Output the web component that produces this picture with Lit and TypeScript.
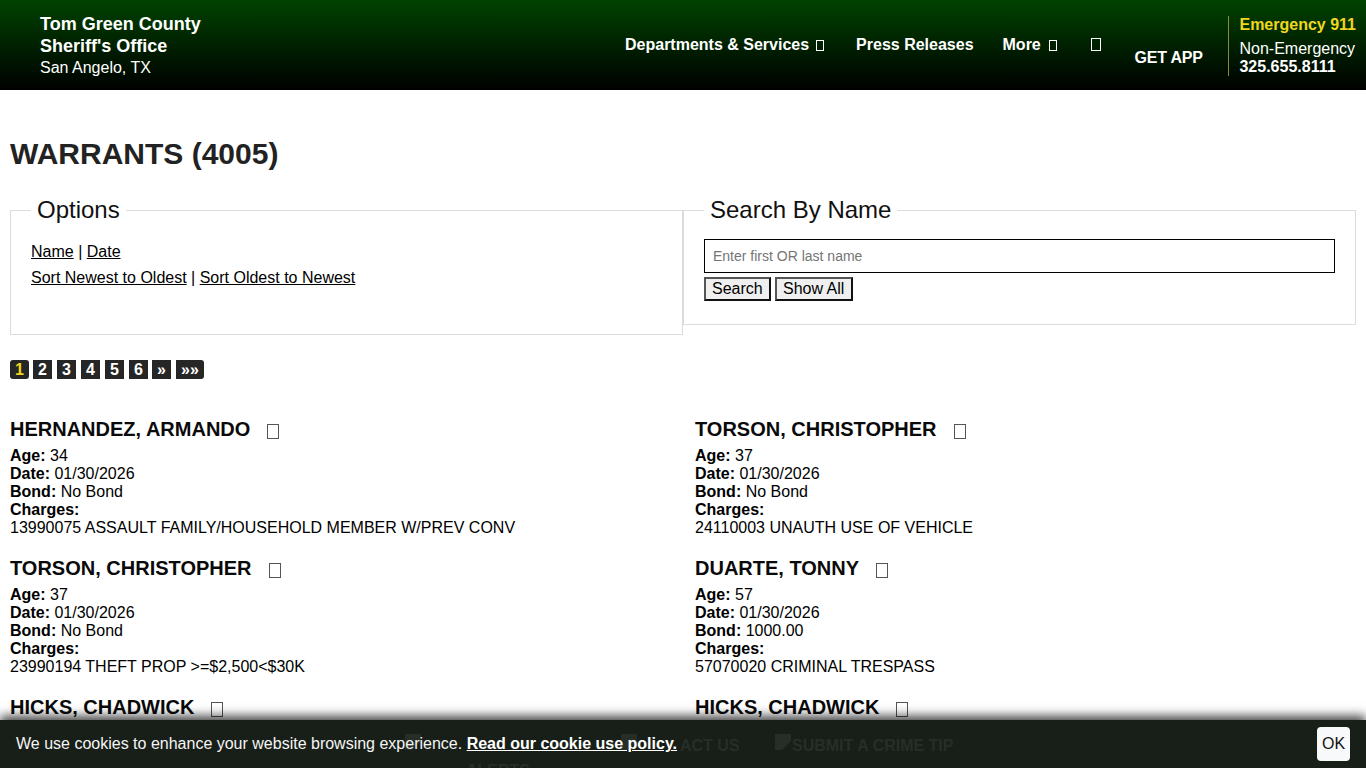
import { LitElement, html, css } from "lit";
import { customElement } from "lit/decorators.js";

const rows = [
  [
    { n: "HERNANDEZ, ARMANDO", a: "34", b: "No Bond", c: "13990075 ASSAULT FAMILY/HOUSEHOLD MEMBER W/PREV CONV" },
    { n: "TORSON, CHRISTOPHER", a: "37", b: "No Bond", c: "24110003 UNAUTH USE OF VEHICLE" },
  ],
  [
    { n: "TORSON, CHRISTOPHER", a: "37", b: "No Bond", c: "23990194 THEFT PROP >=$2,500<$30K" },
    { n: "DUARTE, TONNY", a: "57", b: "1000.00", c: "57070020 CRIMINAL TRESPASS" },
  ],
  [
    { n: "HICKS, CHADWICK", a: "", b: "", c: "" },
    { n: "HICKS, CHADWICK", a: "", b: "", c: "" },
  ],
];

@customElement("app-root")
export class AppRoot extends LitElement {
  static styles = css`
    :host { display: block; height: 768px; overflow: hidden; position: relative; font-family: "Liberation Sans", Arial, sans-serif; color: #000; background: #fff; font-size: 16px; }
    a { color: inherit; }
    header { height: 90px; background: linear-gradient(#004200, #000); color: #fff; display: flex; box-sizing: border-box; padding-right: 10px; }
    .brand { margin-left: 40px; padding-top: 13px; font-size: 18px; line-height: 22px; font-weight: bold; width: 500px; }
    .brand span { display: block; font-size: 16px; font-weight: normal; }
    .nav { flex: 1; display: flex; position: relative; }
    .nav-items { display: flex; padding: 36px 0 0 85px; font-size: 16px; font-weight: bold; line-height: 18px; }
    .nav-items .it { display: flex; align-items: center; height: 18px; margin-right: 32px; white-space: nowrap; }
    .nav-items .dp .tofu { margin-left: 7px; }
    .nav-items .pr { margin-right: 29px; }
    .nav-items .mo { margin-right: 34px; }
    .tofu { display: inline-block; box-sizing: border-box; border: 1px solid currentColor; width: 8px; height: 11px; margin-left: 8px; }
    .nav-items .solo { margin: 0; }
    .nav-items .solo .tofu { margin-left: 0; height: 13px; width: 10px; position: relative; top: -1px; }
    .app { font-weight: bold; font-size: 16px; margin: 49px 0 0 0; line-height: 18px; width: 70px; letter-spacing: -0.2px; white-space: nowrap; }
    .contact { margin: 16px 0 0 24px; height: 60px; border-left: 1px solid #8a8a3a; padding-left: 10px; font-size: 16px; white-space: nowrap; }
    .contact .em { color: #f1d71f; font-weight: bold; line-height: 18px; }
    .contact .ne { line-height: 18px; margin-top: 6px; }
    .contact .ph { font-weight: bold; line-height: 18px; }
    main { padding: 0 10px; }
    h1 { margin: 0; padding-top: 46px; font-size: 30px; line-height: 36px; font-weight: bold; color: #222; }
    .boxes { display: flex; align-items: flex-start; margin-top: 24px; }
    fieldset { flex: 1 1 0; margin: 0; min-width: 0; border: 1px solid #dcdcdc; padding: 0 20px; box-sizing: border-box; }
    legend { font-size: 24px; line-height: 28px; padding: 0 6px; margin-left: 0; color: #111; }
    .opts { height: 139px; box-sizing: border-box; padding-top: 15px; line-height: 26px; }
    .srch { height: 129px; box-sizing: border-box; padding-top: 15px; }
    .srch input { display: block; box-sizing: border-box; width: 631px; height: 34px; border: 1px solid #000; padding: 0 8px; font: 14px "Liberation Sans", Arial, sans-serif; outline: none; background: #fff; margin: 0; }
    .srch input::placeholder { color: #757575; opacity: 1; }
    .btns { display: flex; gap: 4px; margin-top: 4px; }
    .btns button { box-sizing: border-box; height: 24px; border: 2px solid; border-color: #555 #111 #111 #555; background: #efefef; font: 16px "Liberation Sans", Arial, sans-serif; color: #000; padding: 0 6px; margin: 0; line-height: 20px; }
    .btns button + button { width: 78px; padding: 0; }
    .pager { display: flex; gap: 5px; margin-top: 25px; height: 19px; }
    .pager b { display: block; background: #262626; color: #fff; font-size: 16px; line-height: 19px; height: 19px; width: 19px; text-align: center; box-sizing: border-box; }
    .pager b:first-child { color: #f1d71f; border-radius: 3px; }
    .pager b:nth-child(2) { margin-left: -1px; }
    .pager b.nx { margin-left: -1px; }
    .pager b:last-child { border-radius: 0 3px 3px 0; width: 28px; }
    .grid { display: grid; grid-template-columns: 685px 1fr; margin-top: 36px; }
    .rec { height: 139px; }
    .rec h2 { margin: 0; font-size: 20px; line-height: 24px; font-weight: bold; color: #0a0a0a; display: flex; align-items: center; height: 24px; padding-top: 2px; box-sizing: content-box; }
    .rec h2 .tofu { width: 12px; height: 15px; margin-left: 17px; border-color: #555; position: relative; top: 2px; }
    .rec .l { line-height: 18px; }
    .rec .f { margin-top: 6px; }
    .cookie { position: absolute; left: 0; right: 0; bottom: 0; height: 48px; background: #181f18; color: #f5f5f5; box-shadow: 0 -4px 10px rgba(0,0,0,.75); font-size: 16px; display: flex; align-items: center; justify-content: space-between; padding: 0 16px; box-sizing: border-box; overflow: hidden; }
    .cookie .msg { position: relative; }
    .cookie a { font-weight: bold; color: #fff; }
    .cookie .ok { width: 33px; height: 34px; background: #f8f9fa; color: #111; border: 0; border-radius: 4px; font: 16px "Liberation Sans", Arial, sans-serif; padding: 0; position: relative; }
    .ghost { position: absolute; color: #272e27; font-weight: bold; font-size: 16px; line-height: 18px; white-space: nowrap; }
    .g1 { left: 680px; top: 17px; }
    .g2 { left: 792px; top: 17px; }
    .g3 { left: 466px; top: 42px; }
    .gi { position: absolute; background: #272e27; width: 16px; height: 16px; clip-path: polygon(0 0, 100% 0, 100% 45%, 45% 100%, 0 100%); }
    .gi1 { left: 405px; top: 14px; }
    .gi2 { left: 621px; top: 14px; }
    .gi3 { left: 775px; top: 14px; }
  `;

  rec(r: { n: string; a: string; b: string; c: string }) {
    return html`<div class="rec">
      <h2>${r.n}<i class="tofu"></i></h2>
      ${r.a
        ? html`<div class="l f"><b>Age:</b> ${r.a}</div>
            <div class="l"><b>Date:</b> 01/30/2026</div>
            <div class="l"><b>Bond:</b> ${r.b}</div>
            <div class="l"><b>Charges:</b></div>
            <div class="l">${r.c}</div>`
        : ""}
    </div>`;
  }

  render() {
    return html`
      <header>
        <div class="brand">Tom Green County<br />Sheriff's Office<span>San Angelo, TX</span></div>
        <div class="nav">
          <div class="nav-items">
            <div class="it dp">Departments &amp; Services<i class="tofu"></i></div>
            <div class="it pr">Press Releases</div>
            <div class="it mo">More<i class="tofu"></i></div>
            <div class="it solo"><i class="tofu"></i></div>
          </div>
        </div>
        <div class="app">GET APP</div>
        <div class="contact">
          <div class="em">Emergency 911</div>
          <div class="ne">Non-Emergency</div>
          <div class="ph">325.655.8111</div>
        </div>
      </header>
      <main>
        <h1>WARRANTS (4005)</h1>
        <div class="boxes">
          <fieldset class="opts">
            <legend>Options</legend>
            <div><a href="#">Name</a> | <a href="#">Date</a></div>
            <div><a href="#">Sort Newest to Oldest</a> | <a href="#">Sort Oldest to Newest</a></div>
          </fieldset>
          <fieldset class="srch">
            <legend>Search By Name</legend>
            <input placeholder="Enter first OR last name" />
            <div class="btns"><button>Search</button><button>Show All</button></div>
          </fieldset>
        </div>
        <div class="pager">
          <b>1</b><b>2</b><b>3</b><b>4</b><b>5</b><b>6</b><b class="nx">»</b><b>»»</b>
        </div>
        <div class="grid">${rows.flat().map((r) => this.rec(r))}</div>
      </main>
      <div class="cookie">
        <i class="gi gi1"></i><i class="gi gi2"></i><i class="gi gi3"></i>
        <span class="ghost g1">ACT US</span>
        <span class="ghost g2">SUBMIT A CRIME TIP</span>
        <span class="ghost g3">ALERTS</span>
        <span class="msg">We use cookies to enhance your website browsing experience. <a href="#">Read our cookie use policy.</a></span>
        <button class="ok">OK</button>
      </div>
    `;
  }
}
